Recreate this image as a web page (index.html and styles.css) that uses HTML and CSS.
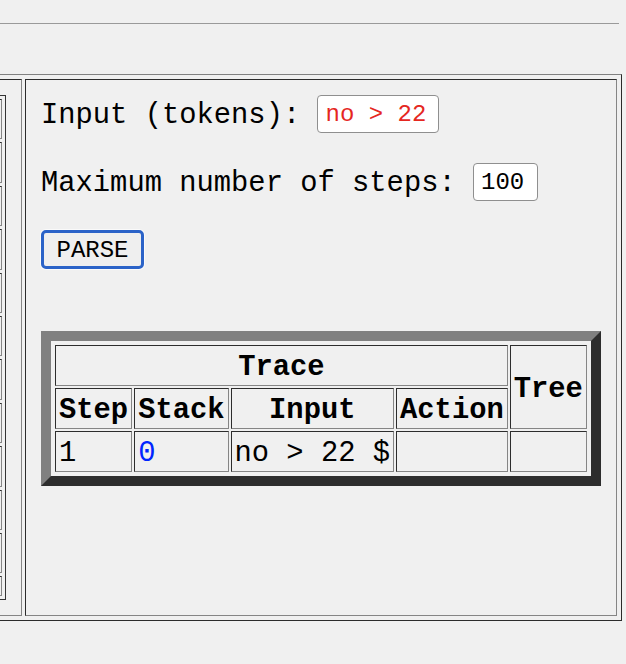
FILE: index.html
```html
<!DOCTYPE html>
<html>
<head>
<meta charset="utf-8">
<title>Parser</title>
<link rel="stylesheet" href="styles.css">
</head>
<body>
<div class="rule"></div>
<div class="frame">
  <div class="cell cell-left">
    <div class="grammar">
      <div class="grammar-row"></div>
      <div class="grammar-row"></div>
      <div class="grammar-row"></div>
      <div class="grammar-row"></div>
      <div class="grammar-row"></div>
      <div class="grammar-row"></div>
      <div class="grammar-row"></div>
      <div class="grammar-row"></div>
      <div class="grammar-row"></div>
      <div class="grammar-row"></div>
      <div class="grammar-row"></div>
      <div class="grammar-row grammar-row-last"></div>
    </div>
  </div>
  <div class="cell cell-right">
    <div class="field"><span class="label">Input (tokens):</span><input class="text-input tokens" type="text" value="no &gt; 22"></div>
    <div class="field"><span class="label">Maximum number of steps:</span><input class="text-input steps" type="text" value="100"></div>
    <div class="actions"><button class="parse" type="button">PARSE</button></div>
    <table class="trace">
      <tr>
        <th colspan="4">Trace</th>
        <th rowspan="2">Tree</th>
      </tr>
      <tr>
        <th>Step</th>
        <th>Stack</th>
        <th>Input</th>
        <th>Action</th>
      </tr>
      <tr>
        <td>1</td>
        <td class="stack">0</td>
        <td>no &gt; 22 $</td>
        <td></td>
        <td></td>
      </tr>
    </table>
  </div>
</div>
</body>
</html>
```
FILE: styles.css
```css
* {
  box-sizing: border-box;
}

html,
body {
  margin: 0;
  background: #f0f0f0;
}

body {
  font-family: "Liberation Mono", monospace;
  font-size: 28.8px;
  color: #000;
  padding-top: 23px;
}

.rule {
  width: 619px;
  border-top: 1px solid #9a9a9a;
  margin-bottom: 50px;
}

.frame {
  display: flex;
  gap: 3px;
  padding: 4px;
  border: 1px solid;
  border-color: #808080 #2b2b2b #2b2b2b #808080;
  margin-left: -283px;
  width: 905px;
}

.cell {
  border: 1px solid;
  border-color: #2b2b2b #858585 #858585 #2b2b2b;
  padding: 15px;
}

.cell-left {
  width: 300px;
  flex: none;
}

.cell-right {
  width: 592px;
  flex: none;
  display: flex;
  flex-direction: column;
  align-items: flex-start;
}

.grammar {
  border: 1px solid #333;
  padding: 3px;
  display: flex;
  flex-direction: column;
  gap: 3px;
}

.grammar-row {
  height: 40.4px;
  border: 1px solid;
  border-color: #2b2b2b #858585 #858585 #2b2b2b;
}

.grammar-row-last {
  height: 19.6px;
}

.field {
  display: flex;
  align-items: center;
  gap: 17.28px;
  height: 38px;
  line-height: 33px;
  white-space: pre;
}

.label {
  padding-top: 3px;
}

.field + .field {
  margin-top: 30px;
}

.text-input {
  height: 38px;
  border: 1px solid #8f8f8f;
  border-radius: 4px;
  background: #fff;
  font-family: "Liberation Mono", monospace;
  font-size: 24px;
  padding: 1px 7px 0;
  margin: 0;
  color: #000;
}

.tokens {
  width: 122px;
  color: #e5271f;
}

.steps {
  width: 65px;
}

.actions {
  margin-top: 29px;
}

.parse {
  display: block;
  width: 103px;
  height: 39px;
  border: 3px solid #2b63c8;
  border-radius: 5px;
  background: #efefef;
  box-shadow: 0 0 0 1px #fafafa;
  font-family: "Liberation Mono", monospace;
  font-size: 24px;
  color: #000;
  padding: 2px 0 0;
  margin: 0;
}

.trace {
  margin-top: 62px;
  border-collapse: separate;
  border-spacing: 2px;
  padding: 2px;
  border: 10px solid;
  border-color: #808080 #2d2d2d #2d2d2d #808080;
  font-size: 28.8px;
}

.trace th,
.trace td {
  border: 1px solid;
  border-color: #2d2d2d #858585 #858585 #2d2d2d;
  padding: 5px 3px 1px;
  line-height: 33px;
  white-space: nowrap;
}

.trace th {
  font-weight: bold;
  text-align: center;
}

.trace td {
  text-align: left;
}

.stack {
  color: #0026ff;
}
```
